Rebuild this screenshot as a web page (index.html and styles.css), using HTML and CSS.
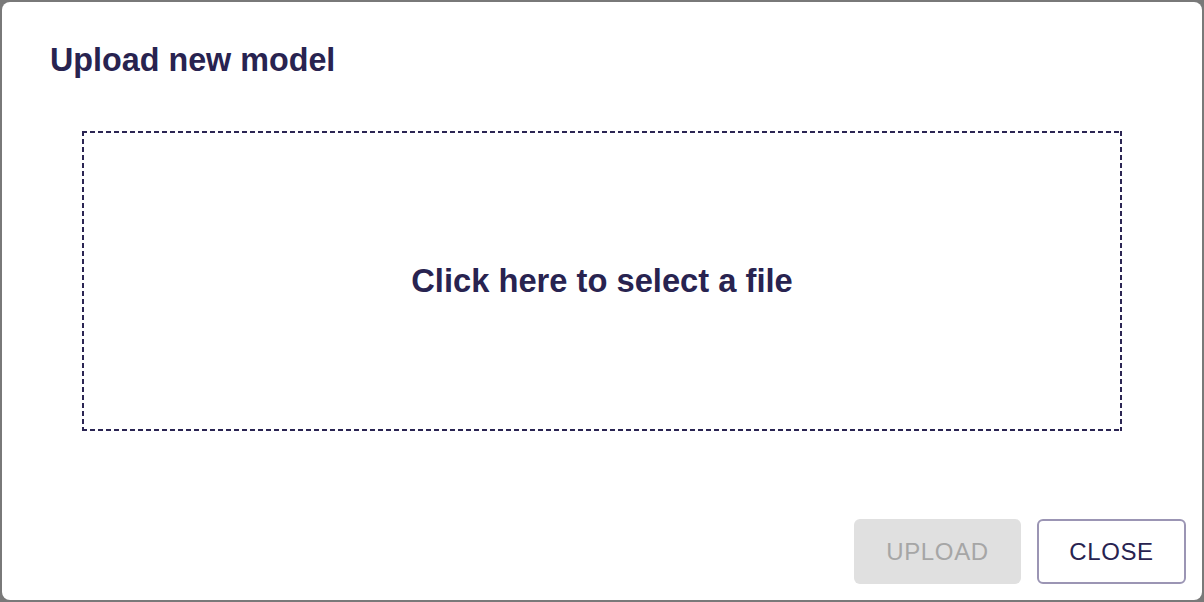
FILE: index.html
```html
<!DOCTYPE html>
<html>
<head>
<meta charset="utf-8">
<link rel="stylesheet" href="styles.css">
</head>
<body>
<div class="dialog">
  <h2 class="title">Upload new model</h2>
  <div class="dropzone">
    <span class="drop-text">Click here to select a file</span>
  </div>
  <div class="actions">
    <button class="btn btn-disabled" disabled>UPLOAD</button>
    <button class="btn btn-outline">CLOSE</button>
  </div>
</div>
</body>
</html>
```

FILE: styles.css
```css
html, body {
  margin: 0;
  padding: 0;
  background: #797979;
  width: 1204px;
  height: 602px;
  overflow: hidden;
}

.dialog {
  margin: 2px 0 0 2px;
  width: 1200px;
  height: 598px;
  background: #ffffff;
  border-radius: 8px;
  box-sizing: border-box;
  display: flex;
  flex-direction: column;
  font-family: "Liberation Sans", Arial, sans-serif;
  color: #282350;
}

.title {
  margin: 0;
  padding: 38px 0 0 48px;
  font-size: 32.3px;
  line-height: 40px;
  font-weight: bold;
}

.dropzone {
  margin: 51px 80px 0 80px;
  height: 300px;
  box-sizing: border-box;
  display: flex;
  align-items: center;
  justify-content: center;
  cursor: pointer;
  background-image:
    linear-gradient(to right, #2b2553 5px, transparent 5px),
    linear-gradient(to right, #2b2553 5px, transparent 5px),
    linear-gradient(to bottom, #2b2553 5px, transparent 5px),
    linear-gradient(to bottom, #2b2553 5px, transparent 5px);
  background-size: 8px 2px, 8px 2px, 2px 8px, 2px 8px;
  background-position: left top, left bottom, left top, right top;
  background-repeat: repeat-x, repeat-x, repeat-y, repeat-y;
}

.drop-text {
  font-size: 32.7px;
  font-weight: bold;
  line-height: 40px;
}

.actions {
  margin-top: auto;
  display: flex;
  justify-content: flex-end;
  gap: 16px;
  padding: 0 16px 16px 0;
}

.btn {
  font-family: "Liberation Sans", Arial, sans-serif;
  font-size: 24px;
  letter-spacing: 0.64px;
  height: 65px;
  border-radius: 6px;
  box-sizing: border-box;
  padding: 0;
}

.btn-disabled {
  width: 167px;
  background: #e0e0e0;
  color: #a6a6a6;
  border: none;
}

.btn-outline {
  width: 149px;
  background: #ffffff;
  color: #282350;
  border: 2px solid #9b95b4;
  cursor: pointer;
}
```
